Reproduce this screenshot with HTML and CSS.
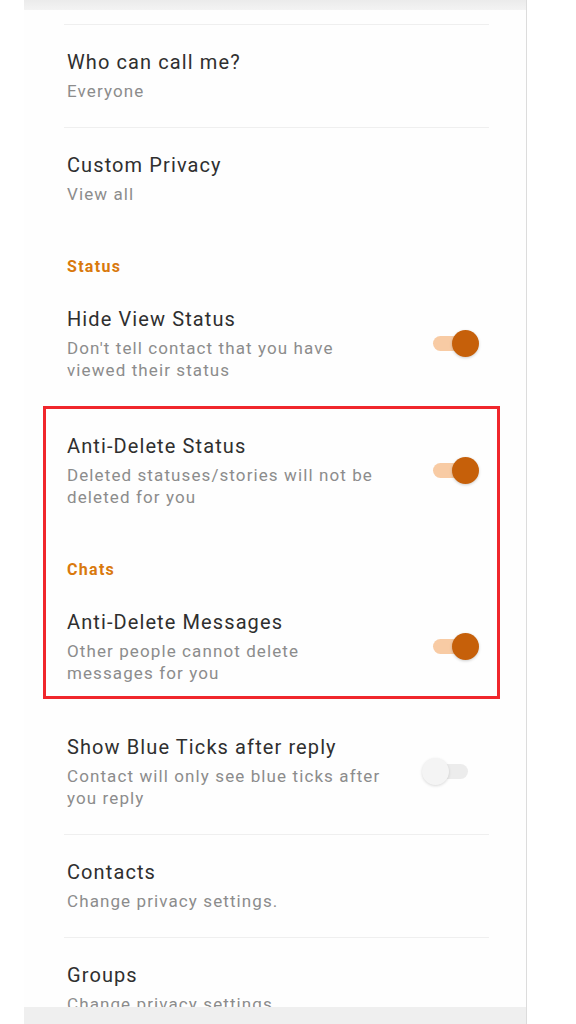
FILE: index.html
```html
<!DOCTYPE html>
<html>
  <head>
    <meta name="viewport" content="width=device-width, initial-scale=1.0">
    <title>Privacy</title>
    <link rel="stylesheet" href="styles.css">
  </head>
  <body>
    <div class="screen">
      <div class="top-bar"></div>
      <div class="list">
        <div class="divider first"></div>

        <div class="item">
          <div class="text">
            <p class="item-title">Who can call me?</p>
            <p class="item-sub">Everyone</p>
          </div>
        </div>
        <div class="divider"></div>

        <div class="item">
          <div class="text">
            <p class="item-title">Custom Privacy</p>
            <p class="item-sub">View all</p>
          </div>
        </div>

        <p class="section">Status</p>
        <div class="item">
          <div class="text">
            <p class="item-title">Hide View Status</p>
            <p class="item-sub">Don't tell contact that you have<br>viewed their status</p>
          </div>
          <div class="switch on"><div class="knob"></div></div>
        </div>

        <div class="highlight">
          <div class="item">
            <div class="text">
              <p class="item-title">Anti-Delete Status</p>
              <p class="item-sub">Deleted statuses/stories will not be<br>deleted for you</p>
            </div>
            <div class="switch on"><div class="knob"></div></div>
          </div>

          <p class="section">Chats</p>
          <div class="item">
            <div class="text">
              <p class="item-title">Anti-Delete Messages</p>
              <p class="item-sub">Other people cannot delete<br>messages for you</p>
            </div>
            <div class="switch on"><div class="knob"></div></div>
          </div>
        </div>

        <div class="item after-box">
          <div class="text">
            <p class="item-title">Show Blue Ticks after reply</p>
            <p class="item-sub">Contact will only see blue ticks after<br>you reply</p>
          </div>
          <div class="switch off"><div class="knob"></div></div>
        </div>
        <div class="divider"></div>

        <div class="item">
          <div class="text">
            <p class="item-title">Contacts</p>
            <p class="item-sub">Change privacy settings.</p>
          </div>
        </div>
        <div class="divider"></div>

        <div class="item">
          <div class="text">
            <p class="item-title">Groups</p>
            <p class="item-sub">Change privacy settings</p>
          </div>
        </div>
      </div>
      <div class="bottom-bar"></div>
    </div>
  </body>
</html>
```

FILE: styles.css
```css
body{
  margin: 0;
  background-color: #ffffff;
  font-family: Roboto, "Liberation Sans", sans-serif;
}
p{
  margin: 0;
}
.screen{
  margin-left: 24px;
  width: 502px;
  height: 1024px;
  border-right: 1px solid #dcdcdc;
  background-color: #fefefe;
  display: flex;
  flex-direction: column;
  overflow: hidden;
}
.top-bar{
  height: 10px;
  background: linear-gradient(#ebebeb, #f3f3f3);
  flex-shrink: 0;
}
.bottom-bar{
  height: 17px;
  background-color: #efefef;
  flex-shrink: 0;
}
.list{
  flex: 1;
  overflow: hidden;
}
.divider{
  margin-left: 40px;
  width: 425px;
  height: 1px;
  background-color: #efefef;
}
.divider.first{
  margin-top: 14px;
}
.item{
  display: flex;
  align-items: center;
  padding: 23px 51px 25px 43px;
}
.text{
  flex: 1;
  white-space: nowrap;
}
.item-title{
  font-size: 20px;
  line-height: 28px;
  letter-spacing: 1.1px;
  color: #2f2f2f;
  margin-bottom: 4px;
}
.item-sub{
  font-size: 17px;
  line-height: 22px;
  letter-spacing: 1.1px;
  color: #8c8c8c;
}
.section{
  margin: 26px 0 4px 43px;
  font-size: 16px;
  line-height: 22px;
  letter-spacing: 1.3px;
  font-weight: bold;
  color: #d9790d;
}
.highlight{
  margin-left: 19px;
  width: 457px;
  box-sizing: border-box;
  border: 3px solid #f0262c;
}
.highlight .item{
  padding-left: 21px;
  padding-right: 22px;
}
.highlight .item:last-child{
  padding-bottom: 12px;
}
.highlight .section{
  margin-left: 21px;
}
.item.after-box{
  padding-top: 34px;
  padding-right: 58px;
}
.switch{
  width: 42px;
  height: 15px;
  border-radius: 8px;
  display: flex;
  align-items: center;
  flex-shrink: 0;
}
.switch.on{
  background-color: #f8cba4;
  justify-content: flex-end;
}
.switch.off{
  background-color: #ececec;
  justify-content: flex-start;
}
.knob{
  width: 27px;
  height: 27px;
  border-radius: 50%;
  flex-shrink: 0;
}
.switch.on .knob{
  background-color: #c6600a;
  margin-right: -4px;
  box-shadow: 0 1px 3px rgba(0, 0, 0, 0.2);
}
.switch.off .knob{
  background-color: #f4f4f4;
  margin-left: -4px;
  box-shadow: 0 1px 3px rgba(0, 0, 0, 0.15);
}
```
